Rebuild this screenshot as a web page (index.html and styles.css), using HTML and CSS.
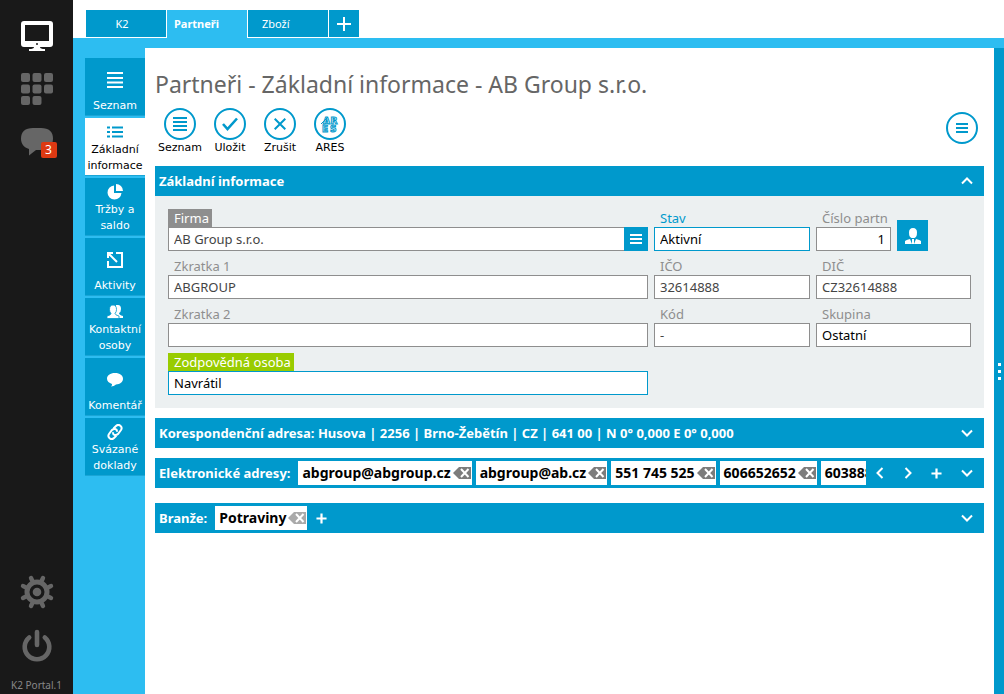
FILE: index.html
```html
<!DOCTYPE html>
<html lang="cs">
<head>
<meta charset="utf-8">
<title>Partneři - Základní informace</title>
<link rel="stylesheet" href="styles.css">
</head>
<body>
<svg class="defs" aria-hidden="true">
  <symbol id="lines" viewBox="0 0 14 14"><path d="M0 1h14M0 5h14M0 9h14M0 13h14" stroke="currentColor" stroke-width="2"/></symbol>
  <symbol id="down" viewBox="0 0 12 12"><path d="M1 3.500l5 5 5-5" fill="none" stroke="currentColor" stroke-width="2"/></symbol>
  <symbol id="plus" viewBox="0 0 12 12"><path d="M6 .5v11M.5 6h11" stroke="currentColor" stroke-width="2.400"/></symbol>
  <symbol id="erase" viewBox="0 0 18 12"><path d="M0 6l6-6h12v12H6z" fill="currentColor"/><path d="M8 2l7.500 8M15.500 2L8 10" stroke="#fff" stroke-width="2"/></symbol>
</svg>
<nav class="rail" aria-label="Portál">
  <button class="rail-btn on" aria-label="Plocha"><svg width="32" height="32" viewBox="0 0 32 32"><path fill="currentColor" fill-rule="evenodd" d="M3 0h26a3 3 0 0 1 3 3v20a3 3 0 0 1-3 3H19q0 2 5 2v2H8v-2q5 0 5-2H3a3 3 0 0 1-3-3V3a3 3 0 0 1 3-3zM4 4v16h24V4z"/><circle cx="16" cy="23" r="1" fill="#191919"/></svg></button>
  <button class="rail-btn" aria-label="Moduly"><svg width="32" height="32" viewBox="0 0 32 32" fill="currentColor"><rect width="9" height="9" rx="2"/><rect x="11.500" width="9" height="9" rx="2"/><rect x="23" width="9" height="9" rx="2"/><rect y="11.500" width="9" height="9" rx="2"/><rect x="11.500" y="11.500" width="9" height="9" rx="2"/><rect x="23" y="11.500" width="9" height="9" rx="2"/><rect y="23" width="9" height="9" rx="2"/><rect x="11.500" y="23" width="9" height="9" rx="2"/></svg></button>
  <button class="rail-btn" aria-label="Zprávy"><svg width="32" height="32" viewBox="0 0 32 32"><path fill="currentColor" d="M12 3h8c8 0 12 4 12 10.500S28 25 20 25h-5l-7 5.500V24c-5-1.500-8-5-8-10.500C0 7 4 3 12 3z"/></svg><span class="badge">3</span></button>
  <span class="grow"></span>
  <button class="rail-btn" aria-label="Nastavení"><svg width="34" height="34" viewBox="-17 -17 34 34"><circle r="10" fill="none" stroke="currentColor" stroke-width="5"/><circle r="4.300" fill="currentColor"/><path d="M4.800-11.500L6-14M-4.800-11.500L-6-14M4.800 11.500L6 14M-4.800 11.500L-6 14M11.500-4.800L14-6M11.500 4.800L14 6M-11.500-4.800L-14-6M-11.500 4.800L-14 6" stroke="currentColor" stroke-width="4.400" stroke-linecap="round"/></svg></button>
  <button class="rail-btn" aria-label="Odhlásit"><svg width="32" height="34" viewBox="0 0 32 34" fill="none" stroke="currentColor" stroke-width="4.600" stroke-linecap="round"><path d="M16 3v13M8.200 8.500a12.300 12.300 0 1 0 15.600 0"/></svg></button>
  <span class="version">K2 Portal.1</span>
</nav>
<div class="app">
  <nav class="tabs" aria-label="Karty">
    <button class="tab">K2</button>
    <button class="tab active">Partneři</button>
    <button class="tab">Zboží</button>
    <button class="tab add" aria-label="Přidat kartu"><svg width="14" height="14" viewBox="0 0 14 14"><path d="M7 0v14M0 7h14" stroke="#fff" stroke-width="2"/></svg></button>
  </nav>
  <div class="work">
    <nav class="side" aria-label="Sekce">
      <a class="side-item" href="#seznam"><svg width="16" height="16" viewBox="0 0 16 16"><path d="M0 1h16M0 6h16M0 10.500h16M0 15h16" stroke="currentColor" stroke-width="2"/></svg><span>Seznam</span></a>
      <a class="side-item current" href="#zakladni"><svg width="16" height="12" viewBox="0 0 16 12"><path d="M0 1.500h3M5 1.500h11M0 6h3M5 6h11M0 10.500h3M5 10.500h11" stroke="currentColor" stroke-width="2.200"/></svg><span>Základní informace</span></a>
      <a class="side-item" href="#trzby"><svg width="16" height="16" viewBox="0 0 16 16" fill="currentColor"><path d="M7 1.500A7 7 0 1 0 14.500 9H7z"/><path d="M9 0v7h7A7 7 0 0 0 9 0z"/></svg><span>Tržby a saldo</span></a>
      <a class="side-item" href="#aktivity"><svg width="16" height="16" viewBox="0 0 16 16" fill="none" stroke="currentColor" stroke-width="2"><path d="M9 1h6v14H1V9M10 10L2 2M1 6V1h5"/></svg><span>Aktivity</span></a>
      <a class="side-item" href="#osoby"><svg width="16" height="16" viewBox="0 0 16 16" fill="currentColor"><path d="M9 1h2q3 0 3 4 0 3-2 4 0 2 4 3v2h-4q-1-2-4-3z"/><path stroke="#0099cc" stroke-width=".8" d="M6 1q3.500 0 3.500 4.500Q9.500 8 8 9.500q0 1.500 4 2.500v2.500H0V12q4-1 4-2.500Q2.500 8 2.500 5.500 2.500 1 6 1z"/></svg><span>Kontaktní osoby</span></a>
      <a class="side-item" href="#komentar"><svg width="16" height="14" viewBox="0 0 16 14"><path fill="currentColor" d="M8 0c5 0 8 2.500 8 5.800s-3 5.700-7 5.700q-2 2-5 2 1.200-1 1-2.500C2 10 0 8.300 0 5.800 0 2.500 3 0 8 0z"/></svg><span>Komentář</span></a>
      <a class="side-item" href="#doklady"><svg width="16" height="16" viewBox="0 0 16 16" fill="none" stroke="currentColor" stroke-width="2" stroke-linecap="round"><path d="M7 4l2-2c3-3 7 1 5 4l-3 4c-2 2-5 1-5-1M9 12l-2 2c-3 3-7-1-5-4l3-4c2-2 5-1 5 1"/></svg><span>Svázané doklady</span></a>
    </nav>
    <main class="sheet">
      <h1>Partneři - Základní informace - AB Group s.r.o.</h1>
      <div class="toolbar">
        <button class="tool"><span class="ring"><svg width="14" height="14"><use href="#lines"/></svg></span>Seznam</button>
        <button class="tool"><span class="ring"><svg width="16" height="14" viewBox="0 0 16 14"><path d="M1 7l4.500 5L15 1.500" fill="none" stroke="currentColor" stroke-width="2.600"/></svg></span>Uložit</button>
        <button class="tool"><span class="ring"><svg width="12" height="12" viewBox="0 0 12 12"><path d="M.7.700l10.600 10.600M11.300.700L.7 11.300" stroke="currentColor" stroke-width="2"/></svg></span>Zrušit</button>
        <button class="tool"><span class="ring"><svg class="ares" width="20" height="18" viewBox="0 0 20 18" aria-hidden="true"><text x="3 10.500" y="8.500">AR</text><text x="2 10" y="17">ES</text><path d="M1 9l7-7"/></svg></span>ARES</button>
        <span class="grow"></span>
        <button class="ring menu" aria-label="Nabídka"><svg width="12" height="10" viewBox="0 0 12 10"><path d="M0 1h12M0 5h12M0 9h12" stroke="currentColor" stroke-width="2"/></svg></button>
      </div>

      <section>
        <h2 class="bar">Základní informace<span class="grow"></span><button class="bar-btn last" aria-label="Sbalit"><svg class="flip" width="12" height="12"><use href="#down"/></svg></button></h2>
        <form class="panel">
          <div class="field"><label class="tag gray" for="firma">Firma</label><div class="combo"><input id="firma" value="AB Group s.r.o."><button type="button" aria-label="Vybrat firmu"><svg width="12" height="10" viewBox="0 0 12 10"><path d="M0 1h12M0 5h12M0 9h12" stroke="currentColor" stroke-width="2"/></svg></button></div></div>
          <div class="field blue dark"><label for="stav">Stav</label><input id="stav" value="Aktivní"></div>
          <div class="partner"><div class="field dark"><label for="cislo">Číslo partn</label><input id="cislo" class="num" value="1"></div><button type="button" class="person" aria-label="Partner"><svg width="16" height="16" viewBox="0 0 16 16" fill="currentColor"><path d="M8 0q4 0 4 4.500Q12 9 9.500 10h-3Q4 9 4 4.500 4 0 8 0z"/><path d="M5 11l2 5H0v-3q1-1 5-2zM11 11l-2 5h7v-3q-1-1-5-2zM7 11h2v5H7z"/></svg></button></div>

          <div class="field"><label for="z1">Zkratka 1</label><input id="z1" value="ABGROUP"></div>
          <div class="field"><label for="ico">IČO</label><input id="ico" value="32614888"></div>
          <div class="field"><label for="dic">DIČ</label><input id="dic" value="CZ32614888"></div>

          <div class="field"><label for="z2">Zkratka 2</label><input id="z2" value=""></div>
          <div class="field"><label for="kod">Kód</label><input id="kod" value="-"></div>
          <div class="field dark"><label for="skupina">Skupina</label><input id="skupina" value="Ostatní"></div>

          <div class="field blue dark"><label class="tag green" for="osoba">Zodpovědná osoba</label><input id="osoba" value="Navrátil"></div>
        </form>
      </section>

      <h2 class="bar">Korespondenční adresa: Husova | 2256 | Brno-Žebětín | CZ | 641 00 | N 0° 0,000 E 0° 0,000<span class="grow"></span><button class="bar-btn last" aria-label="Rozbalit"><svg width="12" height="12"><use href="#down"/></svg></button></h2>

      <section class="bar">
        <h2>Elektronické adresy:</h2>
        <div class="chips">
          <span class="chip">abgroup@abgroup.cz<button aria-label="Odebrat"><svg width="18" height="12"><use href="#erase"/></svg></button></span>
          <span class="chip">abgroup@ab.cz<button aria-label="Odebrat"><svg width="18" height="12"><use href="#erase"/></svg></button></span>
          <span class="chip">551 745 525<button aria-label="Odebrat"><svg width="18" height="12"><use href="#erase"/></svg></button></span>
          <span class="chip">606652652<button aria-label="Odebrat"><svg width="18" height="12"><use href="#erase"/></svg></button></span>
          <span class="chip">603888<button aria-label="Odebrat"><svg width="18" height="12"><use href="#erase"/></svg></button></span>
        </div>
        <button class="bar-btn" aria-label="Předchozí"><svg class="left" width="12" height="12"><use href="#down"/></svg></button>
        <button class="bar-btn" aria-label="Další"><svg class="right" width="12" height="12"><use href="#down"/></svg></button>
        <button class="bar-btn" aria-label="Přidat"><svg width="11" height="11"><use href="#plus"/></svg></button>
        <button class="bar-btn last" aria-label="Rozbalit"><svg width="12" height="12"><use href="#down"/></svg></button>
      </section>

      <section class="bar trade">
        <h2>Branže:</h2>
        <span class="chip light">Potraviny<button aria-label="Odebrat"><svg width="18" height="12"><use href="#erase"/></svg></button></span>
        <button class="bar-btn" aria-label="Přidat"><svg width="11" height="11"><use href="#plus"/></svg></button>
        <span class="grow"></span>
        <button class="bar-btn last" aria-label="Rozbalit"><svg width="12" height="12"><use href="#down"/></svg></button>
      </section>
    </main>
    <button class="strip" aria-label="Panel"><i></i><i></i><i></i></button>
  </div>
</div>
</body>
</html>
```
FILE: styles.css
```css
* { box-sizing: border-box; }

body {
  margin: 0;
  display: flex;
  min-height: 100vh;
  background: #fff;
  color: #000;
  font: 13px/18px "Noto Sans", "Open Sans", sans-serif;
}

button {
  margin: 0;
  padding: 0;
  border: 0;
  background: none;
  color: inherit;
  font: inherit;
}

svg { display: block; flex: none; }
.defs { position: absolute; width: 0; height: 0; }
.grow { flex: 1; }

.rail {
  width: 73px;
  flex: none;
  display: flex;
  flex-direction: column;
  align-items: center;
  gap: 20px;
  padding: 21px 0 0;
  background: #191919;
  color: #666;
}
.rail-btn { position: relative; }
.rail-btn.on { color: #fff; }
.badge {
  position: absolute;
  left: 20px;
  top: 17px;
  width: 16px;
  height: 16px;
  border-radius: 2px;
  background: #dc3912;
  color: #fff;
  font-size: 12px;
  line-height: 16px;
}
.version { font-size: 10px; line-height: 18px; margin-top: -7px; color: #888; }

.app { flex: 1; min-width: 0; display: flex; flex-direction: column; }

.tabs {
  display: flex;
  align-items: flex-start;
  gap: 1px;
  height: 38px;
  padding: 10px 13px 0;
}
.tab {
  width: 80px;
  height: 27px;
  padding-left: 14px;
  background: #0099cc;
  color: #fff;
  font-size: 11px;
  text-align: left;
}
.tab:first-child { padding: 0; text-align: center; padding-right: 8px; }
.tab.active { height: 28px; padding-left: 7px; background: #2dbdf1; font-weight: bold; }
.tab.add { width: 30px; padding-left: 8px; }

.work { flex: 1; display: flex; background: #2dbdf1; }

.side {
  width: 72px;
  flex: none;
  display: flex;
  flex-direction: column;
  gap: 2px;
  padding: 20px 0 0 12px;
}
.side-item {
  height: 58px;
  display: flex;
  flex-direction: column;
  align-items: center;
  justify-content: space-between;
  padding: 3px 0 1px;
  border-bottom: 1px solid #1aa5d6;
  background: #0099cc;
  color: #fff;
  font: 11px/16px "DejaVu Sans", sans-serif;
  text-align: center;
  text-decoration: none;
}
.side-item svg { margin: auto; }
.side-item.current { background: #fff; color: #0099cc; }
.side-item.current span { color: #000; }

.sheet {
  flex: 1;
  min-width: 0;
  margin-top: 10px;
  padding: 20px 10px;
  background: #fff;
}

h1 {
  margin: 0;
  color: #666;
  font-size: 23px;
  font-weight: normal;
  line-height: 32px;
}

.toolbar { display: flex; height: 66px; padding-top: 8px; }
.tool {
  width: 50px;
  height: 48px;
  display: flex;
  flex-direction: column;
  align-items: center;
  font: 11px/16px "DejaVu Sans", sans-serif;
}
.ring {
  width: 32px;
  height: 32px;
  flex: none;
  display: flex;
  align-items: center;
  justify-content: center;
  border: 2px solid #0099cc;
  border-radius: 50%;
  color: #0099cc;
}
.menu { margin: 4px 6px 0 0; }
.ares text {
  font: bold 9px "DejaVu Sans", sans-serif;
  fill: #fff;
  stroke: #0099cc;
  stroke-width: 1;
}
.ares path { stroke: #0099cc; }

.bar {
  display: flex;
  align-items: center;
  height: 30px;
  margin: 10px 0 0;
  padding-left: 4px;
  background: #0099cc;
  color: #fff;
  font-size: 13px;
  font-weight: bold;
  white-space: nowrap;
}
.bar h2 { margin: 0 8px 0 0; font-size: 13px; }
section > h2.bar { margin-top: 0; }
.trade { margin-top: 15px; }
.bar-btn {
  width: 28px;
  height: 30px;
  flex: none;
  display: flex;
  align-items: center;
  justify-content: center;
}
.bar-btn.last { width: 34px; }
.flip { transform: rotate(180deg); }
.left { transform: rotate(90deg); }
.right { transform: rotate(-90deg); }

.chips { flex: 1; min-width: 0; display: flex; gap: 4px; overflow: hidden; }
.chip {
  height: 24px;
  flex: none;
  display: flex;
  align-items: center;
  gap: 2px;
  padding: 0 1px 0 4px;
  background: #fff;
  color: #000;
  font-size: 14px;
}
.chip button { color: #7c7c7c; }
.chip.light button { color: #aaa; }

.panel {
  display: grid;
  grid-template-columns: 480fr 156fr 155fr;
  gap: 6px;
  padding: 13px;
  background: #ecf0f1;
}
.field {
  min-width: 0;
  display: flex;
  flex-direction: column;
  align-items: flex-start;
}
label {
  height: 18px;
  padding-left: 6px;
  color: #8e8e8e;
  white-space: nowrap;
}
.tag { padding-right: 3px; color: #fff; }
.gray { background: #8e8e8e; }
.green { background: #99cc00; }
.blue label:not(.tag) { color: #0099cc; }
input {
  width: 100%;
  height: 24px;
  padding: 0 5px;
  border: 1px solid #8e8e8e;
  border-radius: 0;
  background: #fff;
  color: #444;
  font: inherit;
}
.dark input { color: #000; }
.blue input { border-color: #0099cc; }
.num { text-align: right; }
.combo { width: 100%; display: flex; }
.combo input { flex: 1; min-width: 0; border-right: 0; }
.combo button {
  width: 24px;
  height: 24px;
  display: flex;
  align-items: center;
  justify-content: center;
  background: #0099cc;
  color: #fff;
}
.partner { display: flex; align-items: flex-end; gap: 6px; }
.partner .field { width: 75px; }
.person {
  width: 31px;
  height: 31px;
  display: flex;
  align-items: center;
  justify-content: center;
  background: #0099cc;
  color: #fff;
}

.strip {
  width: 10px;
  flex: none;
  display: flex;
  flex-direction: column;
  align-items: center;
  justify-content: center;
  gap: 4px;
  margin-top: 10px;
  background: #0099cc;
}
.strip i { width: 3px; height: 3px; background: #fff; }
```
